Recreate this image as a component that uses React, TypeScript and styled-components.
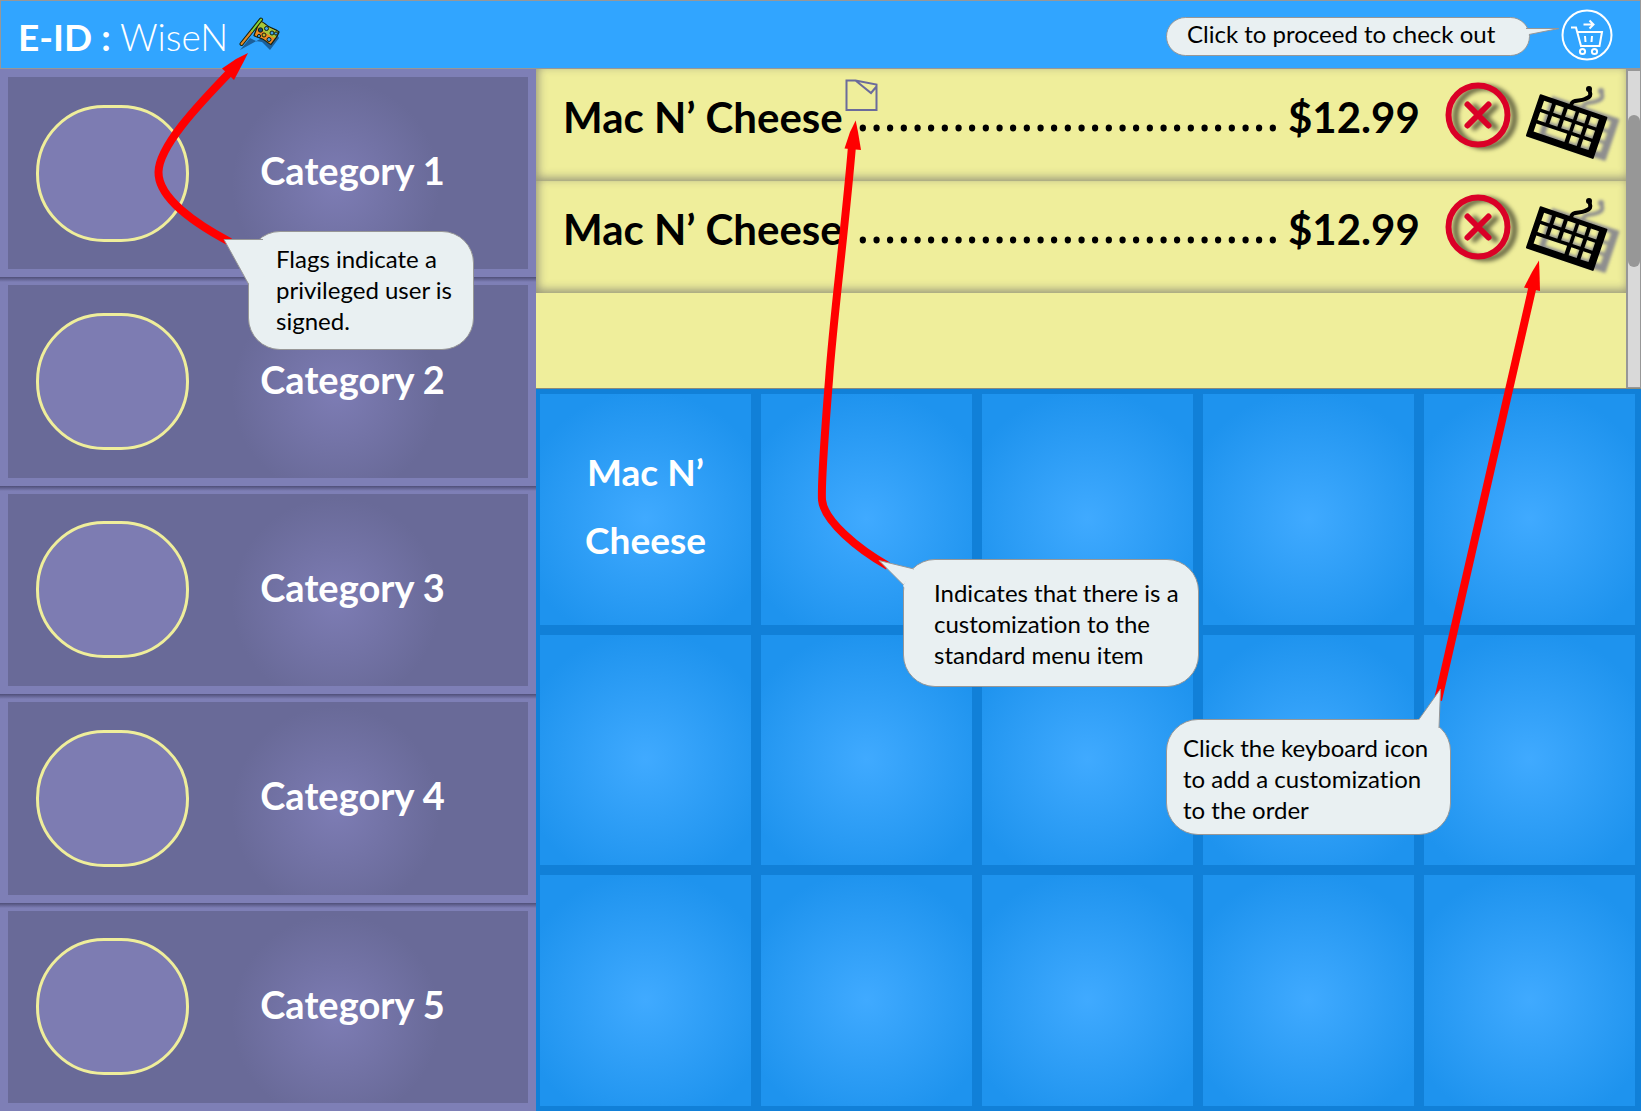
import React from "react";
import styled, { createGlobalStyle } from "styled-components";

const GlobalStyle = createGlobalStyle`
  *, *::before, *::after { box-sizing: border-box; }
  body { margin: 0; font-family: Lato, "Open Sans", sans-serif; font-variant-ligatures: none; color: #000; }
  button { font: inherit; color: inherit; border: 0; padding: 0; background: none; cursor: pointer; }
  h1, h2, p, ul { margin: 0; padding: 0; font-weight: inherit; }
  ul { list-style: none; }
`;

const Screen = styled.div`
  position: relative;
  display: flex;
  flex-direction: column;
  min-height: 100vh;
  overflow: hidden;
`;

const Header = styled.header`
  display: flex;
  align-items: center;
  justify-content: space-between;
  height: 69px;
  padding: 0 27px 0 17px;
  background: #31a5ff;
  border: 1px solid #979797;
`;

const UserId = styled.h1`
  display: flex;
  align-items: center;
  gap: 11px;
  padding-top: 4px;
  color: #fff;
  font-size: 37px;
  line-height: 46px;
  font-weight: 300;

  b { font-weight: 700; }
  svg { display: block; margin-top: -4px; }
`;

const CheckoutArea = styled.div`
  display: flex;
  align-items: center;
`;

const Hint = styled.p`
  width: 364px;
  height: 39px;
  margin-top: 4px;
  padding: 0 20px;
  border: 1px solid #979797;
  border-radius: 20px;
  background: #e9f0f2;
  font-size: 24px;
  line-height: 32px;
  font-weight: 400;
  white-space: nowrap;
`;

const HintTail = styled.svg`
  position: relative;
  display: block;
  width: 36px;
  height: 10px;
  margin: -8px 0 0 -5px;
`;

const CheckoutButton = styled.button`
  display: block;
  width: 52px;
  height: 52px;

  svg { display: block; }
`;

const Body = styled.div`
  flex: 1;
  display: grid;
  grid-template-columns: 536fr 1105fr;
`;

const Categories = styled.nav`
  display: grid;
  grid-auto-rows: 1fr;
`;

const CategoryButton = styled.button`
  display: grid;
  grid-template-columns: 209px 1fr;
  align-items: center;
  border: 8px solid #7e7fb6;
  background: radial-gradient(circle at 328px 56%, #7d7cb4 0, #696a98 104px);
  color: #fff;
  text-align: center;
  font-size: 38px;
  line-height: 46px;
  font-weight: 700;
  position: relative;

  &:not(:first-child)::before {
    content: "";
    position: absolute;
    inset: -8px -8px auto;
    height: 5px;
    background: linear-gradient(#4f4f78, #7e7fb6);
  }
`;

const Picture = styled.span`
  width: 153px;
  height: 137px;
  margin-left: 28px;
  border: 3px solid #efee9b;
  border-radius: 68px;
  background: #7d7cb2;
`;

const CategoryName = styled.span`
  padding: 0 40px 6px 0;
`;

const Main = styled.main`
  display: flex;
  flex-direction: column;
  min-width: 0;
`;

const Order = styled.section`
  display: flex;
  height: 320px;
  background: #efee9b;
  border-bottom: 1px solid #8b8b7a;
`;

const OrderList = styled.ul`
  flex: 1;
  min-width: 0;
`;

const OrderRow = styled.li`
  display: flex;
  align-items: flex-start;
  height: 112px;
  padding: 10px 6px 0 27px;
  box-shadow: inset 2px -3px 10px rgba(60, 60, 90, 0.5);
  font-size: 42px;
  line-height: 76px;
  font-weight: 700;
  white-space: nowrap;
`;

const ItemName = styled.span`
  position: relative;
  width: 293px;
`;

const NoteIcon = styled.svg`
  position: absolute;
  left: 282px;
  top: 0;
  width: 33px;
  height: 33px;
`;

const Leader = styled.span`
  flex: 1;
  font-family: "Noto Sans", sans-serif;
  font-size: 51px;
  line-height: 64px;
  font-weight: 400;
`;

const Price = styled.span`
  width: 156px;
`;

const RowButton = styled.button<{ $width: number }>`
  width: ${(p) => p.$width}px;
  height: 80px;

  svg { display: block; overflow: visible; }
`;

const ScrollTrack = styled.div`
  width: 15px;
  padding: 44px 0 0;
  background: #d9d9d9;
  border: solid #979797;
  border-width: 2px 1px 1px 2px;
`;

const ScrollThumb = styled.div`
  height: 152px;
  border-radius: 6px;
  background: #979797;
`;

const Menu = styled.section`
  flex: 1;
  display: grid;
  grid-template-columns: repeat(5, 1fr);
  grid-template-rows: repeat(3, 1fr);
  background: #1180d8;
`;

const MenuCell = styled.button`
  border: solid #1180d8;
  border-width: 5px 6px 5px 4px;
  background: radial-gradient(circle at 50% 54%, #40aaff 0, #1e93ee 128px);
  color: #fff;
  padding: 0 40px 6px;
  font-size: 37px;
  line-height: 68px;
  font-weight: 700;
`;

const ArrowLayer = styled.svg`
  position: absolute;
  left: 0;
  top: 0;
  width: 1641px;
  height: 1111px;
  pointer-events: none;
`;

const Callout = styled.aside<{ $x: number; $y: number; $w: number; $h: number; $pad: string }>`
  position: absolute;
  left: ${(p) => p.$x}px;
  top: ${(p) => p.$y}px;
  width: ${(p) => p.$w}px;
  height: ${(p) => p.$h}px;
  padding: ${(p) => p.$pad};
  border: 1px solid #979797;
  border-radius: 32px;
  background: #e9f0f2;
  font-size: 24px;
  line-height: 31px;
  font-weight: 400;
  white-space: pre-line;

  svg { position: absolute; left: 0; top: 0; overflow: visible; }
`;

const RacingFlag = () => (
  <svg width="40" height="36" viewBox="238 18 40 36" overflow="visible" aria-label="Privileged user" role="img">
    <path d="M239 51l10-12 6 3 6 1 8 8 9-12-3-5-14 5z" fill="#1c5f99" />
    <path d="M258.500 22c4 .5 5.500 3.500 9 5.500s7 2.500 10.500 5.500c-1.500 5-5 8-8 12.500-3-1-5-4-8.500-5.500s-5.500-1.500-8.500-3.500z" fill="#f08a24" stroke="#15220f" strokeWidth="1.200" />
    <path d="M259 23c4 .5 5.500 3.500 9 5.500s6 2.500 9 4.500l-3 6c-5-1-9-6-17-9z" fill="#a4c83c" />
    <g fill="#3fa0ee" stroke="#15220f" strokeWidth="1">
      <circle cx="259.500" cy="31" r="2.200" fill="#12497c" />
      <circle cx="265.500" cy="29.500" r="2" />
      <circle cx="271" cy="34" r="2" />
      <circle cx="263" cy="36" r="2" fill="#c9b327" />
      <circle cx="268" cy="40.500" r="2" />
      <circle cx="275" cy="34.500" r="1.600" />
      <circle cx="258" cy="37" r="1.600" />
    </g>
    <path d="M240.500 45L260 20.500" stroke="#15220f" strokeWidth="4" strokeLinecap="round" />
    <path d="M240.500 45L251 32" stroke="#e08a28" strokeWidth="2" strokeLinecap="round" />
    <path d="M251 32L260 20.500" stroke="#86d43c" strokeWidth="2" strokeLinecap="round" />
  </svg>
);

const CartIcon = () => (
  <svg width="52" height="52" viewBox="0 0 52 52" fill="none" stroke="#fff" strokeWidth="2" aria-hidden="true">
    <circle cx="26" cy="26" r="24.500" />
    <path d="M10 18.500h5l5 18.500h18.500l2.500-14H16.500M24 27l.5 6M31 27l-.5 6M22.500 15.500h10M28.500 11.500l4 4-4 4" />
    <circle cx="21.500" cy="42.500" r="2.600" />
    <circle cx="33.500" cy="42.500" r="2.600" />
  </svg>
);

const RemoveIcon = () => (
  <svg width="70" height="70" viewBox="0 4 70 70" fill="none" stroke="#da0027" strokeWidth="6" aria-hidden="true">
    <g style={{ filter: "drop-shadow(7px 2px 2px rgba(0,0,0,.55))" }}>
      <circle cx="34" cy="35" r="29.500" />
      <path d="M23.500 24.500l21 21M44.500 24.500l-21 21" strokeLinecap="round" />
    </g>
  </svg>
);

const KEYS = [
  [5, 4], [17.5, 4], [30, 4], [42, 4], [54.5, 4],
  [5, 16], [17.5, 16], [30, 16], [42, 16], [54.5, 16],
  [42, 28], [54.5, 28],
];

const KeyboardIcon = () => (
  <svg width="94" height="80" viewBox="0 0 94 80" aria-hidden="true">
    <g style={{ filter: "drop-shadow(12px 2px 1.5px rgba(125,125,140,.85))" }}>
      <path d="M47 28c0-9 8-5 14-8 6-2 6-4 4.500-9" fill="none" stroke="#000" strokeWidth="4" strokeLinecap="round" />
      <circle cx="65" cy="10" r="3" />
      <path
        transform="translate(16 15) rotate(18.800)"
        fillRule="evenodd"
        d={
          "M1 0H70.500a1 1 0 0 1 1 1V43.500a1 1 0 0 1-1 1H1a1 1 0 0 1-1-1V1a1 1 0 0 1 1-1z" +
          KEYS.map(([x, y]) => `M${x + 1} ${y + 1}h8.500v8.500h-8.500z`).join("") +
          "M6 29h32.500v8.500h-32.500z"
        }
      />
    </g>
  </svg>
);

const CustomizedNote = () => (
  <NoteIcon viewBox="0 0 33 33" fill="none" stroke="#6b6b9b" strokeWidth="2" role="img" aria-label="Customized">
    <path d="M1.500 1.500H10.500L31.500 5.500V31H1.500zM10.500 1.500l15.500 12.500 5.500-6.500" />
  </NoteIcon>
);

const Tail = ({ d, cover }: { d: string; cover: string }) => (
  <svg width="1" height="1" aria-hidden="true">
    <path d={cover} fill="#e9f0f2" />
    <path d={d} fill="#e9f0f2" stroke="#979797" />
  </svg>
);

const categories = ["Category 1", "Category 2", "Category 3", "Category 4", "Category 5"];

const order = [
  { name: "Mac N’ Cheese", price: "$12.99", customized: true },
  { name: "Mac N’ Cheese", price: "$12.99", customized: false },
];

const menu = ["Mac N’ Cheese", ...Array(14).fill("")];

export default function App() {
  return (
    <Screen>
      <GlobalStyle />
      <Header>
        <UserId>
          <span><b>E-ID :</b> WiseN</span>
          <RacingFlag />
        </UserId>
        <CheckoutArea>
          <Hint>Click to proceed to check out</Hint>
          <HintTail viewBox="0 0 36 10" aria-hidden="true">
            <path d="M0 2.500H34L4 8.500 0 9z" fill="#e9f0f2" />
            <path d="M1 2.500H34L4 8.500" fill="none" stroke="#979797" />
          </HintTail>
          <CheckoutButton aria-label="Check out"><CartIcon /></CheckoutButton>
        </CheckoutArea>
      </Header>

      <Body>
        <Categories>
          {categories.map((name) => (
            <CategoryButton key={name}>
              <Picture />
              <CategoryName>{name}</CategoryName>
            </CategoryButton>
          ))}
        </Categories>

        <Main>
          <Order>
            <OrderList>
              {order.map((item, i) => (
                <OrderRow key={i}>
                  <ItemName>
                    {item.name}
                    {item.customized && <CustomizedNote />}
                  </ItemName>
                  <Leader>{".".repeat(31)}</Leader>
                  <Price>{item.price}</Price>
                  <RowButton $width={80} aria-label="Remove item"><RemoveIcon /></RowButton>
                  <RowButton $width={96} aria-label="Customize item"><KeyboardIcon /></RowButton>
                </OrderRow>
              ))}
            </OrderList>
            <ScrollTrack><ScrollThumb /></ScrollTrack>
          </Order>
          <Menu>
            {menu.map((name, i) => (
              <MenuCell key={i} aria-label={name || "Empty slot"}>{name}</MenuCell>
            ))}
          </Menu>
        </Main>
      </Body>

      <ArrowLayer viewBox="0 0 1641 1111" fill="none" stroke="#f00" strokeWidth="8" aria-hidden="true">
        <path d="M230 242C196 224 158 198 158.500 172C159 147 195 108 233 69" />
        <path d="M852 146C845 230 833 320 829 380C825 430 821 480 822 500C824 521 858 549 888 566" />
        <path d="M1533 285L1438 700" />
        <g fill="#f00" stroke="none">
          <path d="M248 53L236 59 222 68.500 234 80 243.500 62z" />
          <path d="M855.700 120.500L850 132 844.500 148.500 861 150 858 132z" />
          <path d="M1539 260.500L1532 272 1524 287.500 1540 291 1539.500 272z" />
        </g>
      </ArrowLayer>

      <Callout $x={248} $y={231} $w={226} $h={119} $pad="11px 0 0 27px">
        <Tail cover="M-1 50L14 7h16l-20 50z" d="M14 7.500H-25L-.5 52" />
        {"Flags indicate a\nprivileged user is\nsigned."}
      </Callout>
      <Callout $x={903} $y={559} $w={296} $h={128} $pad="17px 0 0 30px">
        <Tail cover="M-1 26L9 8l16 2-18 24z" d="M10 9L-25 .5L-.5 25" />
        {"Indicates that there is a\ncustomization to the\nstandard menu item"}
      </Callout>
      <Callout $x={1166} $y={719} $w={285} $h={116} $pad="12px 0 0 16px">
        <Tail cover="M251 -1L272 8l-8 12-16-14z" d="M251.500 0L273.500 -31L272 8" />
        {"Click the keyboard icon\nto add a customization\nto the order"}
      </Callout>
    </Screen>
  );
}
